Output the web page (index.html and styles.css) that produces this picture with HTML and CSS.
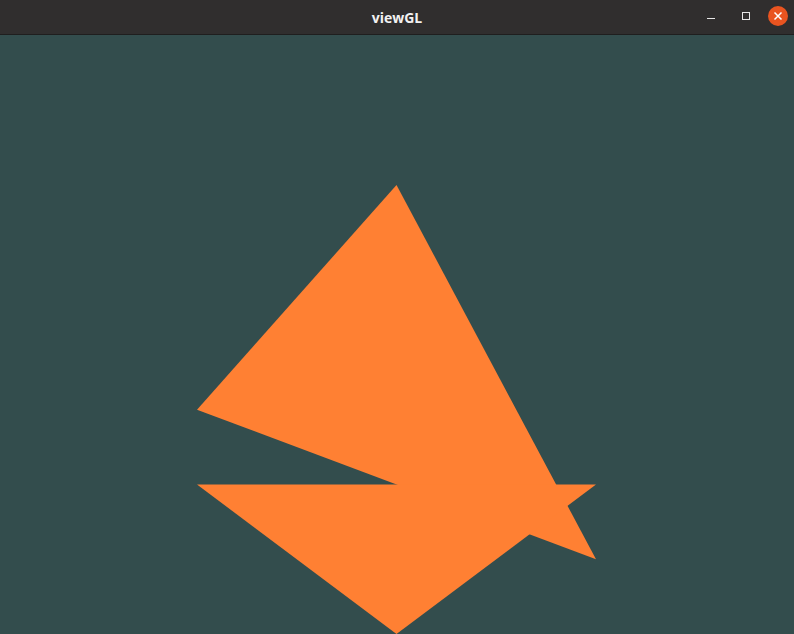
FILE: index.html
```html
<!DOCTYPE html>
<html>
<head>
<meta charset="utf-8">
<link rel="stylesheet" href="styles.css">
</head>
<body>
<div class="window">
  <header class="titlebar">
    <div class="title">viewGL</div>
    <div class="controls">
      <span class="btn min"><svg width="10" height="10" viewBox="0 0 10 10"><rect x="1" y="7" width="8" height="1" fill="#e6e6e6"/></svg></span>
      <span class="btn max"><svg width="10" height="10" viewBox="0 0 10 10"><rect x="1.5" y="1.5" width="7" height="7" fill="none" stroke="#e6e6e6" stroke-width="1"/></svg></span>
      <span class="btn close"><svg width="10" height="10" viewBox="0 0 10 10"><path d="M1.5 1.5 L8.5 8.5 M8.5 1.5 L1.5 8.5" stroke="#fff" stroke-width="1.5"/></svg></span>
    </div>
  </header>
  <main class="canvas">
    <svg class="gl" viewBox="0 0 794 599" preserveAspectRatio="none">
      <polygon points="396.5,150 197,374.75 596,524.25" fill="#ff8033"/>
      <polygon points="197,449.5 596,449.5 396.5,599" fill="#ff8033"/>
    </svg>
  </main>
</div>
</body>
</html>
```
FILE: styles.css
```css
html, body { margin: 0; padding: 0; }
body { width: 794px; height: 634px; overflow: hidden; background: #334d4d; }
.window { display: flex; flex-direction: column; width: 794px; height: 634px; }
.titlebar {
  position: relative;
  height: 34px;
  flex: 0 0 34px;
  background: #302e2e;
  border-bottom: 1px solid #1f1e1e;
  display: flex;
  align-items: center;
  justify-content: center;
}
.title {
  font-family: "Open Sans", "DejaVu Sans", sans-serif;
  font-weight: 700;
  font-size: 14px;
  color: #f2f2f2;
}
.controls {
  position: absolute;
  right: 6px;
  top: 6px;
  display: flex;
  gap: 12px;
  align-items: center;
}
.btn { width: 20px; height: 20px; display: flex; align-items: center; justify-content: center; border-radius: 50%; }
.btn.min { margin-right: 3px; }
.btn.close { background: #e95420; }
.canvas { flex: 1; display: flex; }
.gl { width: 794px; height: 599px; display: block; }
```
